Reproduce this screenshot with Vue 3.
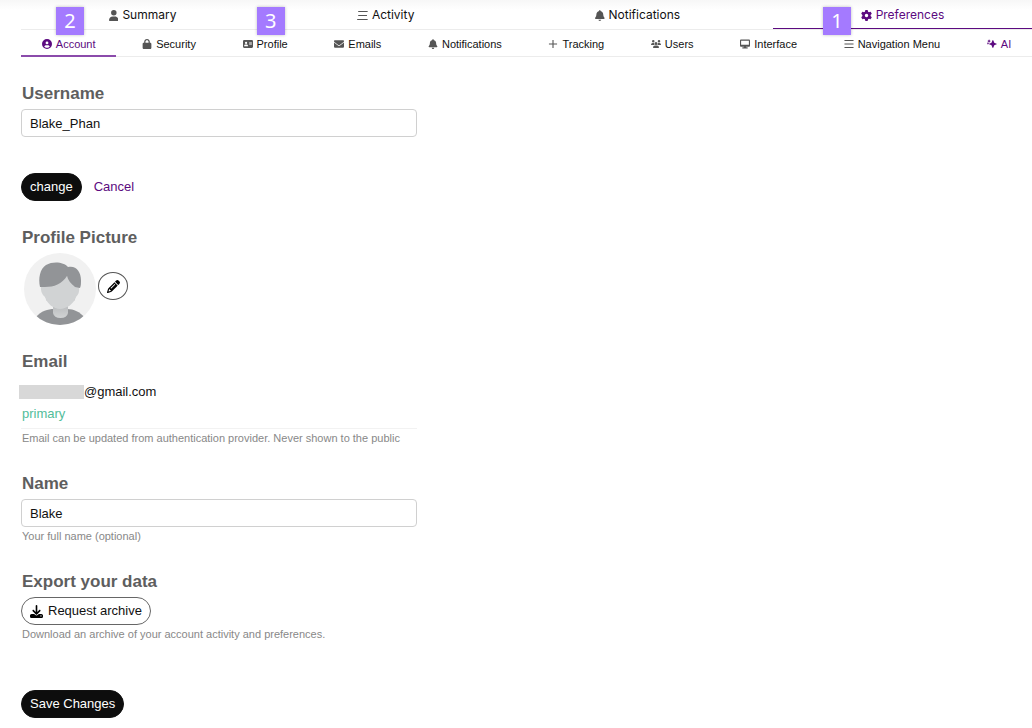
<script setup>
import { ref } from 'vue'

const shapes = {
  user: { box: '0 0 448 512', d: 'M224 256A128 128 0 1 0 224 0a128 128 0 1 0 0 256zm-45.7 48C79.8 304 0 383.8 0 482.3C0 498.7 13.3 512 29.7 512H418.3c16.4 0 29.7-13.3 29.7-29.7C448 383.8 368.2 304 269.7 304H178.3z' },
  stream: { box: '0 0 512 512', d: 'M56 48H496V98H56zM56 231H464V281H56zM8 414H496V464H8z' },
  bell: { box: '0 0 448 512', d: 'M224 0c-17.7 0-32 14.3-32 32V51.2C119 66 64 130.6 64 208v18.8c0 47-17.3 92.4-48.5 127.6l-7.4 8.3c-8.4 9.4-10.4 22.9-5.3 34.4S19.4 416 32 416H416c12.6 0 24-7.4 29.2-18.9s3.1-25-5.3-34.4l-7.4-8.3C401.3 319.2 384 273.9 384 226.8V208c0-77.4-55-142-128-156.8V32c0-17.7-14.3-32-32-32zm45.3 493.3c12-12 18.7-28.3 18.7-45.3H224 160c0 17 6.7 33.3 18.7 45.3s28.3 18.7 45.3 18.7s33.3-6.7 45.3-18.7z' },
  gear: { box: '0 0 512 512', d: 'M495.9 166.6c3.2 8.7 .5 18.4-6.4 24.6l-43.3 39.4c1.1 8.3 1.7 16.8 1.7 25.4s-.6 17.1-1.7 25.4l43.3 39.4c6.9 6.2 9.6 15.9 6.4 24.6c-4.4 11.9-9.7 23.3-15.8 34.3l-4.7 8.1c-6.6 11-14 21.4-22.1 31.2c-5.9 7.2-15.7 9.6-24.5 6.8l-55.7-17.7c-13.4 10.3-28.2 18.9-44 25.4l-12.5 57.1c-2 9.1-9 16.3-18.2 17.8c-13.8 2.3-28 3.5-42.5 3.5s-28.7-1.2-42.5-3.5c-9.2-1.5-16.2-8.7-18.2-17.8l-12.5-57.1c-15.8-6.5-30.6-15.1-44-25.4L83.1 425.9c-8.8 2.8-18.6 .3-24.5-6.8c-8.1-9.8-15.5-20.2-22.1-31.2l-4.7-8.1c-6.1-11-11.4-22.4-15.8-34.3c-3.2-8.7-.5-18.4 6.4-24.6l43.3-39.4C64.6 273.1 64 264.6 64 256s.6-17.1 1.7-25.4L22.4 191.2c-6.9-6.2-9.6-15.9-6.4-24.6c4.4-11.9 9.7-23.3 15.8-34.3l4.7-8.1c6.6-11 14-21.4 22.1-31.2c5.9-7.2 15.7-9.6 24.5-6.8l55.7 17.7c13.4-10.3 28.2-18.9 44-25.4l12.5-57.1c2-9.1 9-16.3 18.2-17.8C227.3 1.2 241.5 0 256 0s28.7 1.2 42.5 3.5c9.2 1.5 16.2 8.7 18.2 17.8l12.5 57.1c15.8 6.5 30.6 15.1 44 25.4l55.7-17.7c8.8-2.8 18.6-.3 24.5 6.8c8.1 9.8 15.5 20.2 22.1 31.2l4.7 8.1c6.1 11 11.4 22.4 15.8 34.3zM256 336a80 80 0 1 0 0-160 80 80 0 1 0 0 160z' },
  account: { box: '0 0 512 512', d: 'M399 384.2C376.9 345.8 335.4 320 288 320H224c-47.4 0-88.9 25.8-111 64.2c35.2 39.2 86.2 63.8 143 63.8s107.8-24.7 143-63.8zM0 256a256 256 0 1 1 512 0A256 256 0 1 1 0 256zm256 16a72 72 0 1 0 0-144 72 72 0 1 0 0 144z' },
  lock: { box: '0 0 448 512', d: 'M144 144v48H304V144c0-44.2-35.8-80-80-80s-80 35.8-80 80zM80 192V144C80 64.5 144.5 0 224 0s144 64.5 144 144v48h16c35.3 0 64 28.7 64 64V448c0 35.3-28.7 64-64 64H64c-35.3 0-64-28.7-64-64V256c0-35.3 28.7-64 64-64H80z' },
  card: { box: '0 0 576 512', d: 'M64 32H512a64 64 0 0 1 64 64V416a64 64 0 0 1-64 64H64a64 64 0 0 1-64-64V96a64 64 0 0 1 64-64zM176 256a64 64 0 1 0 0-128 64 64 0 1 0 0 128zM144 288a80 80 0 0 0-80 80q0 16 16 16H272q16 0 16-16a80 80 0 0 0-80-80zM352 144V176H512V144zM352 208V240H512V208zM352 272V304H512V272z' },
  envelope: { box: '0 0 512 512', d: 'M48 64C21.5 64 0 85.5 0 112c0 15.1 7.1 29.3 19.2 38.4L236.8 313.6c11.4 8.5 27 8.5 38.4 0L492.8 150.4c12.1-9.1 19.2-23.3 19.2-38.4c0-26.5-21.5-48-48-48H48zM0 176V384c0 35.3 28.7 64 64 64H448c35.3 0 64-28.7 64-64V176L294.4 339.2c-22.8 17.1-54 17.1-76.8 0L0 176z' },
  plus: { box: '0 0 448 512', d: 'M196 48H252V228H432V284H252V464H196V284H16V228H196z' },
  users: { box: '0 0 640 512', d: 'M144 0a80 80 0 1 1 0 160 80 80 0 1 1 0-160zM512 0a80 80 0 1 1 0 160 80 80 0 1 1 0-160zM320 128a96 96 0 1 1 0 192 96 96 0 1 1 0-192zM0 299a107 107 0 0 1 107-107h43c16 0 31 4 45 10a128 128 0 0 0 42 118H21a21 21 0 0 1-21-21zM403 320a128 128 0 0 0 42-118c14-6 29-10 45-10h43a107 107 0 0 1 107 107 21 21 0 0 1-21 21zM128 485a133 133 0 0 1 133-133h118a133 133 0 0 1 133 133 27 27 0 0 1-27 27H155a27 27 0 0 1-27-27z' },
  desktop: { box: '0 0 576 512', d: 'M64 0C28.7 0 0 28.7 0 64V352c0 35.3 28.7 64 64 64H240l-10.7 32H160c-17.7 0-32 14.3-32 32s14.3 32 32 32H416c17.7 0 32-14.3 32-32s-14.3-32-32-32H346.7L336 416H512c35.3 0 64-28.7 64-64V64c0-35.3-28.7-64-64-64H64zM512 64V304H64V64H512z' },
  bars: { box: '0 0 512 512', d: 'M24 52H488V104H24zM24 230H488V282H24zM24 408H488V460H24z' },
  sparkles: { box: '0 0 544 512', d: 'M320 40Q340 40 348 62L394 190L522 240Q548 256 522 272L394 322L348 450Q320 494 292 450L246 322L118 272Q92 256 118 240L246 190L292 62Q300 40 320 40zM112 0L146 62L208 96L146 130L112 192L78 130L16 96L78 62zM52 150L78 196L120 220L78 244L52 290L26 244L0 220L26 196z' },
  pencil: { box: '0 0 512 512', d: 'M410.3 231l11.3-11.3-33.9-33.9-62.1-62.1L291.7 89.8l-11.3 11.3-22.6 22.6L58.6 322.9c-10.4 10.4-18 23.3-22.2 37.4L1 480.7c-2.5 8.4-.2 17.5 6.1 23.7s15.3 8.5 23.7 6.1l120.3-35.4c14.1-4.2 27-11.8 37.4-22.2L387.7 253.7 410.3 231zM160 399.4l-9.1 22.7c-4 3.1-8.5 5.4-13.3 6.9L59.4 452l23-78.1c1.4-4.9 3.8-9.4 6.9-13.3l22.7-9.1v32c0 8.8 7.2 16 16 16h32zM362.7 18.7L348.3 33.2 325.7 55.8 314.3 67.1l33.9 33.9 62.1 62.1 33.9 33.9 11.3-11.3 22.6-22.6 14.5-14.5c25-25 25-65.5 0-90.5L453.3 18.7c-25-25-65.5-25-90.5 0zm-47.4 168l-144 144c-6.2 6.2-16.4 6.2-22.6 0s-6.2-16.4 0-22.6l144-144c6.2-6.2 16.4-6.2 22.6 0s6.2 16.4 0 22.6z' },
  download: { box: '0 0 512 512', d: 'M288 32c0-17.7-14.3-32-32-32s-32 14.3-32 32V274.7l-73.4-73.4c-12.5-12.5-32.8-12.5-45.3 0s-12.5 32.8 0 45.3l128 128c12.5 12.5 32.8 12.5 45.3 0l128-128c12.5-12.5 12.5-32.8 0-45.3s-32.8-12.5-45.3 0L288 274.7V32zM64 352c-35.3 0-64 28.7-64 64v32c0 35.3 28.7 64 64 64H448c35.3 0 64-28.7 64-64V416c0-35.3-28.7-64-64-64H346.5l-45.3 45.3c-25 25-65.5 25-90.5 0L165.5 352H64zm368 56a24 24 0 1 1 0 48 24 24 0 1 1 0-48z' }
}

const mainTabs = [
  { label: 'Summary', icon: 'user' },
  { label: 'Activity', icon: 'stream' },
  { label: 'Notifications', icon: 'bell' },
  { label: 'Preferences', icon: 'gear', active: true, step: 1 }
]

const subTabs = [
  { label: 'Account', icon: 'account', active: true, step: 2 },
  { label: 'Security', icon: 'lock' },
  { label: 'Profile', icon: 'card', step: 3 },
  { label: 'Emails', icon: 'envelope' },
  { label: 'Notifications', icon: 'bell' },
  { label: 'Tracking', icon: 'plus' },
  { label: 'Users', icon: 'users' },
  { label: 'Interface', icon: 'desktop' },
  { label: 'Navigation Menu', icon: 'bars' },
  { label: 'AI', icon: 'sparkles', tinted: true }
]

const username = ref('Blake_Phan')
const fullName = ref('Blake')
</script>

<template>
  <div class="page">
    <header>
      <nav class="tabs main" aria-label="User">
        <a v-for="t in mainTabs" :key="t.label" href="#" class="tab" :class="{ active: t.active }">
          <svg class="icon" :viewBox="shapes[t.icon].box" aria-hidden="true"><path fill-rule="evenodd" :d="shapes[t.icon].d" /></svg>
          <span>{{ t.label }}</span>
          <b v-if="t.step" class="step">{{ t.step }}</b>
        </a>
      </nav>
      <nav class="tabs sub" aria-label="Preferences">
        <a v-for="t in subTabs" :key="t.label" href="#" class="tab" :class="{ active: t.active, tinted: t.tinted }">
          <svg class="icon" :viewBox="shapes[t.icon].box" aria-hidden="true"><path fill-rule="evenodd" :d="shapes[t.icon].d" /></svg>
          <span>{{ t.label }}</span>
          <b v-if="t.step" class="step">{{ t.step }}</b>
        </a>
      </nav>
    </header>

    <main>
      <form class="form" @submit.prevent>
        <section>
          <label class="title" for="username">Username</label>
          <input id="username" v-model="username" class="field" type="text" spellcheck="false" />
          <div class="actions">
            <button type="button" class="pill dark">change</button>
            <a href="#" class="cancel">Cancel</a>
          </div>
        </section>

        <section>
          <h2 class="title">Profile Picture</h2>
          <div class="picture">
            <svg class="avatar" viewBox="0 0 72 72" role="img" aria-label="Avatar">
              <defs>
                <clipPath id="disc"><circle cx="36" cy="36" r="36" /></clipPath>
                <linearGradient id="neck" x1="0" y1="0" x2="0" y2="1">
                  <stop offset="0" stop-color="#b4b6b8" />
                  <stop offset="1" stop-color="#d1d3d4" />
                </linearGradient>
              </defs>
              <circle cx="36" cy="36" r="36" fill="#f1f1f1" />
              <g clip-path="url(#disc)">
                <path fill="#929497" d="M12 64C17 58 24 56 30 56H43C50 56 56 59 60 64V72H12z" />
                <path fill="#808285" d="M21 42L26 47L23 48zM52 42L47 47L50 48z" />
                <path fill="url(#neck)" d="M29 49H44V60Q43 65 36.500 65Q30 65 29 60z" />
                <path fill="#d1d3d4" d="M17 33Q22 32 28 29L43 23L50 33L55 34Q56 40 52 44C50 51 42 56 36 56C30 56 23 51 21 44Q16 40 17 33z" />
                <path fill="#929497" d="M16 34C14 25 16 16 22 12C29 8 40 9 44 14C52 12 57 19 57 27C57 30 57 33 56 35L51 34C47 31 44 27 43 23C38 31 30 34 21 34z" />
              </g>
            </svg>
            <button type="button" class="edit" aria-label="Edit profile picture">
              <svg :viewBox="shapes.pencil.box" aria-hidden="true"><path :d="shapes.pencil.d" /></svg>
            </button>
          </div>
        </section>

        <section>
          <h2 class="title">Email</h2>
          <div class="email">
            <div class="address"><span class="redacted"></span>@gmail.com</div>
            <div class="primary">primary</div>
          </div>
          <p class="hint">Email can be updated from authentication provider. Never shown to the public</p>
        </section>

        <section>
          <label class="title" for="name">Name</label>
          <input id="name" v-model="fullName" class="field" type="text" spellcheck="false" />
          <p class="hint">Your full name (optional)</p>
        </section>

        <section>
          <h2 class="title">Export your data</h2>
          <button type="button" class="pill light">
            <svg :viewBox="shapes.download.box" aria-hidden="true"><path fill-rule="evenodd" :d="shapes.download.d" /></svg>
            Request archive
          </button>
          <p class="hint">Download an archive of your account activity and preferences.</p>
        </section>

        <button type="submit" class="pill dark save">Save Changes</button>
      </form>
    </main>
  </div>
</template>

<style>
body {
  margin: 0;
  background: #fff;
}
</style>

<style scoped>
.page {
  font-family: "Liberation Sans", Arial, sans-serif;
  font-size: 13px;
  line-height: 22px;
  color: #111;
  padding-left: 21px;
  background: linear-gradient(#f7f7f7, #fff 10px);
}
.tabs {
  display: flex;
  gap: 5px;
  border-bottom: 1px solid #ececec;
}
.tab {
  position: relative;
  flex: 1 1 auto;
  display: flex;
  align-items: center;
  justify-content: center;
  gap: 4px;
  box-sizing: border-box;
  padding-top: 2px;
  color: #111;
  text-decoration: none;
  white-space: nowrap;
}
.main {
  font-family: Inter, "Liberation Sans", sans-serif;
  font-size: 12px;
}
.main .tab {
  height: 29px;
  border-bottom: 1px solid transparent;
}
.main .active {
  border-color: #5c0a80;
}
.sub {
  font-size: 11px;
}
.sub .tab {
  height: 27px;
  margin-bottom: -1px;
  border-bottom: 2px solid transparent;
}
.sub .active {
  border-color: #8b4bab;
}
.icon {
  height: 11px;
  fill: #555;
}
.sub .icon {
  width: 10px;
  height: 10px;
}
.active,
.tinted {
  color: #5c0a80;
}
.active .icon,
.tinted .icon {
  fill: #5c0a80;
}
.step {
  position: absolute;
  z-index: 1;
  top: 7px;
  left: 50px;
  width: 28px;
  height: 28px;
  font: 20px/28px "Noto Sans", sans-serif;
  text-align: center;
  color: #fff;
  background: #a47aff;
  box-shadow: 0 0 3px rgba(0, 0, 0, 0.25);
}
.sub .step {
  top: -23px;
  left: 35px;
}
.form {
  display: flex;
  flex-direction: column;
  gap: 25px;
  max-width: 396px;
  padding: 25px 0 10px;
}
.title {
  display: block;
  margin: 0 0 3px;
  padding-left: 1px;
  font: bold 17px/24px "Liberation Sans", Arial, sans-serif;
  color: #5e5e5e;
}
.field {
  display: block;
  box-sizing: border-box;
  width: 100%;
  height: 28px;
  padding: 0 8px;
  font: inherit;
  color: #111;
  background: #fff;
  border: 1px solid #d0d0d0;
  border-radius: 4px;
}
.actions {
  display: flex;
  align-items: center;
  gap: 12px;
  margin-top: 36px;
}
.pill {
  display: flex;
  align-items: center;
  gap: 5px;
  height: 28px;
  padding: 0 8px;
  font: inherit;
  border: 1px solid #111;
  border-radius: 14px;
}
.dark {
  color: #fff;
  background: #0d0d0d;
}
.light {
  color: #111;
  background: #fff;
  border-color: #666;
}
.light svg {
  width: 13px;
  height: 13px;
}
.cancel {
  color: #5c0a80;
  text-decoration: none;
}
.picture {
  display: flex;
  gap: 2px;
  padding-left: 3px;
}
.avatar {
  width: 72px;
  height: 72px;
}
.edit {
  display: flex;
  align-items: center;
  justify-content: center;
  width: 30px;
  height: 28px;
  margin-top: 19px;
  padding: 0;
  background: #fff;
  border: 1px solid #555;
  border-radius: 50%;
}
.edit svg {
  width: 13px;
  height: 13px;
}
.email {
  padding: 4px 0 3px;
  border-bottom: 1px solid #f2f2f2;
}
.address {
  display: flex;
  align-items: center;
}
.redacted {
  width: 65px;
  height: 14px;
  margin-left: -2px;
  background: #d8d8d8;
}
.primary {
  padding-left: 1px;
  color: #52bd9a;
}
.hint {
  margin: 1px 0 0;
  padding-left: 1px;
  font-size: 11px;
  line-height: 17px;
  color: #888;
}
.save {
  align-self: flex-start;
  margin-top: 22px;
}
</style>
